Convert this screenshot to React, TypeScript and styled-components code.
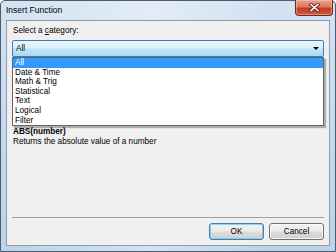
import React from "react";
import styled, { createGlobalStyle } from "styled-components";

const GlobalStyle = createGlobalStyle`
  html, body { margin: 0; padding: 0; background: #ffffff; }
  body { font-family: "Liberation Sans", Arial, sans-serif; }
  * { box-sizing: border-box; }
`;

const Window = styled.div`
  width: 336px;
  height: 252px;
  display: flex;
  flex-direction: column;
  border: 1px solid #4f5b68;
  border-radius: 5px 5px 0 0;
  padding: 0 5px 5px 5px;
  background:
    linear-gradient(90deg, rgba(255,255,255,0) 0%, rgba(255,255,255,0.35) 45%, rgba(255,255,255,0) 80%),
    linear-gradient(180deg, #d3e3f3 0%, #c6daef 50%, #bcd3ea 100%);
`;

const TitleBar = styled.div`
  height: 19px;
  display: flex;
  align-items: flex-start;
  justify-content: space-between;
`;

const Title = styled.div`
  padding-top: 4px;
  font-size: 8.5px;
  line-height: 11px;
  color: #000;
`;

const CloseButton = styled.div`
  width: 38px;
  height: 16px;
  margin-top: -1px;
  margin-right: -3px;
  border: 1px solid #6b2a20;
  border-top: none;
  border-radius: 0 0 4px 4px;
  background: linear-gradient(180deg, #e8a08d 0%, #d97a63 45%, #c23b22 55%, #cf5a3e 100%);
  box-shadow: inset 0 0 0 1px rgba(255, 210, 195, 0.45);
  display: flex;
  align-items: center;
  justify-content: center;
`;

const Client = styled.div`
  flex: 1;
  display: flex;
  flex-direction: column;
  background: #f0f0f0;
  border: 1px solid #8b9bb0;
  padding: 5px 5px 5px 5px;
  font-size: 8.2px;
  color: #000;
`;

const Label = styled.div`
  margin-left: 1px;
  line-height: 10px;
  height: 10px;
`;

const Underlined = styled.span`
  text-decoration: underline;
`;

const ComboWrap = styled.div`
  position: relative;
  margin-top: 4px;
`;

const Combo = styled.div`
  height: 17px;
  border: 1px solid #3c7fb1;
  border-radius: 2px;
  background: linear-gradient(180deg, #eaf6fd 0%, #d9f0fc 48%, #bee6fd 52%, #a7d9f5 100%);
  display: flex;
  align-items: center;
  justify-content: space-between;
  padding: 0 4px 0 3px;
  line-height: 10px;
`;

const Arrow = styled.div`
  width: 0;
  height: 0;
  border-left: 3px solid transparent;
  border-right: 3px solid transparent;
  border-top: 3px solid #000;
`;

const DropList = styled.div`
  position: absolute;
  top: 100%;
  left: 0;
  width: 312px;
  background: #ffffff;
  border: 1px solid #646464;
  box-shadow: 2px 2px 1px rgba(0, 0, 0, 0.28);
  z-index: 2;
`;

const Item = styled.div<{ $selected?: boolean }>`
  height: 9.6px;
  line-height: 9.6px;
  padding-left: 2px;
  background: ${(p) => (p.$selected ? "#3399ff" : "transparent")};
  color: ${(p) => (p.$selected ? "#ffffff" : "#000000")};
`;

const Description = styled.div`
  margin-top: 70px;
  margin-left: 1px;
  line-height: 10px;
`;

const FuncName = styled.div`
  font-weight: bold;
`;

const Spacer = styled.div`
  flex: 1;
`;

const Separator = styled.div`
  height: 1px;
  background: #a0a0a0;
  margin-bottom: 5px;
`;

const ButtonRow = styled.div`
  display: flex;
  justify-content: flex-end;
  gap: 5px;
`;

const Button = styled.div<{ $default?: boolean }>`
  width: 55px;
  height: 17px;
  border: 1px solid ${(p) => (p.$default ? "#3c7fb1" : "#707070")};
  border-radius: 3px;
  background: linear-gradient(180deg, #f2f2f2 0%, #ebebeb 48%, #dddddd 52%, #cfcfcf 100%);
  box-shadow: inset 0 0 0 1px ${(p) => (p.$default ? "rgba(120, 200, 240, 0.8)" : "rgba(255,255,255,0.7)")};
  display: flex;
  align-items: center;
  justify-content: center;
  line-height: 10px;
`;

const categories = ["All", "Date & Time", "Math & Trig", "Statistical", "Text", "Logical", "Filter"];

export default function App() {
  return (
    <>
      <GlobalStyle />
      <Window>
        <TitleBar>
          <Title>Insert Function</Title>
          <CloseButton>
            <svg width="11" height="9" viewBox="0 0 11 9">
              <path d="M2 1.5 L9 7.5 M9 1.5 L2 7.5" stroke="#5a2016" strokeWidth="3.2" strokeLinecap="square" />
              <path d="M2 1.5 L9 7.5 M9 1.5 L2 7.5" stroke="#ffffff" strokeWidth="1.6" strokeLinecap="square" />
            </svg>
          </CloseButton>
        </TitleBar>
        <Client>
          <Label>
            Select a <Underlined>c</Underlined>ategory:
          </Label>
          <ComboWrap>
            <Combo>
              <span>All</span>
              <Arrow />
            </Combo>
            <DropList>
              {categories.map((c, i) => (
                <Item key={c} $selected={i === 0}>
                  {c}
                </Item>
              ))}
            </DropList>
          </ComboWrap>
          <Description>
            <FuncName>ABS(number)</FuncName>
            <div>Returns the absolute value of a number</div>
          </Description>
          <Spacer />
          <Separator />
          <ButtonRow>
            <Button $default>OK</Button>
            <Button>Cancel</Button>
          </ButtonRow>
        </Client>
      </Window>
    </>
  );
}
